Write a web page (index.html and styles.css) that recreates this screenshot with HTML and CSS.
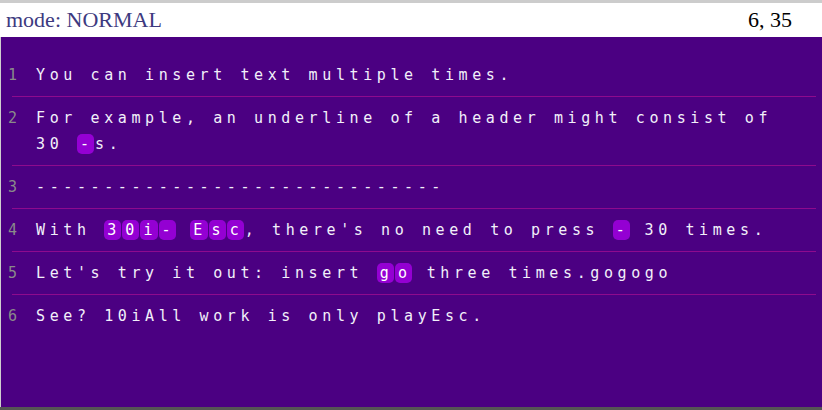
FILE: index.html
```html
<!DOCTYPE html>
<html>
<head>
<meta charset="utf-8">
<link rel="stylesheet" href="styles.css">
</head>
<body>
<div class="app">
  <header class="status">
    <span class="mode">mode: NORMAL</span>
    <span class="pos">6, 35</span>
  </header>
  <main class="editor">
    <div class="row"><span class="num">1</span><span class="text">You can insert text multiple times.</span></div>
    <div class="row"><span class="num">2</span><span class="text">For example, an underline of a header might consist of 30 <kbd>-</kbd>s.</span></div>
    <div class="row"><span class="num">3</span><span class="text">------------------------------</span></div>
    <div class="row"><span class="num">4</span><span class="text">With <kbd>3</kbd><kbd>0</kbd><kbd>i</kbd><kbd>-</kbd> <kbd>E</kbd><kbd>s</kbd><kbd>c</kbd>, there's no need to press <kbd>-</kbd> 30 times.</span></div>
    <div class="row"><span class="num">5</span><span class="text">Let's try it out: insert <kbd>g</kbd><kbd>o</kbd> three times.gogogo</span></div>
    <div class="row last"><span class="num">6</span><span class="text">See? 10iAll work is only playEsc.</span></div>
  </main>
</div>
</body>
</html>
```

FILE: styles.css
```css
html, body {
  margin: 0;
  padding: 0;
}
body {
  width: 822px;
  height: 410px;
  overflow: hidden;
  background: #4b0082;
}
.app {
  display: flex;
  flex-direction: column;
  height: 410px;
  box-sizing: border-box;
  border-top: 3px solid #cccccc;
  border-bottom: 3px solid #555555;
}
.status {
  height: 34px;
  flex: none;
  background: #ffffff;
  display: flex;
  align-items: center;
  justify-content: space-between;
  padding: 0 30px 0 6px;
  font-family: "Liberation Serif", "Times New Roman", serif;
  font-size: 22px;
}
.mode {
  color: #3d3a80;
}
.pos {
  color: #000000;
}
.editor {
  flex: 1;
  background: #4b0082;
  border-left: 1px solid #cfcfcf;
  padding-top: 17px;
  font-family: "DejaVu Sans Mono", monospace;
  font-size: 15px;
  line-height: 26px;
  color: #f2f0fa;
}
.row {
  display: flex;
  margin: 0 6px 0 11px;
  padding: 8px 0;
  border-bottom: 1px solid #8e0a8e;
}
.row.last {
  border-bottom: none;
}
.num {
  flex: none;
  width: 28px;
  margin-left: -4px;
  color: #8a8a8a;
}
.text {
  flex: 1;
  padding-right: 11px;
  letter-spacing: 4.6px;
  white-space: pre-wrap;
}
kbd {
  display: inline-block;
  font-family: inherit;
  font-size: inherit;
  line-height: 18px;
  padding: 1px 0.5px 1px 3px;
  margin-right: 1px;
  background: #9400d3;
  color: #ffffff;
  border-radius: 5px;
}
```
